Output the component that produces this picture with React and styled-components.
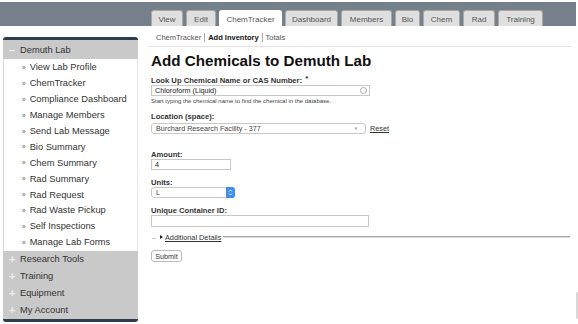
import React from "react";
import styled, { createGlobalStyle } from "styled-components";

const Global = createGlobalStyle`
  html, body { margin: 0; padding: 0; background: #fff; overflow: hidden; }
  body { font-family: "Liberation Sans", Arial, Helvetica, sans-serif; color: #222; }
  * { box-sizing: border-box; }
`;

const Page = styled.div`
  width: 578px;
  height: 324px;
  position: relative;
  overflow: hidden;
`;

const TopStrip = styled.div`
  height: 2px;
`;

const Header = styled.div`
  height: 24px;
  width: 576px;
  background: #75808a;
  display: flex;
  align-items: flex-end;
  padding-left: 151px;
  gap: 3px;
`;

const Tab = styled.div`
  width: ${(p) => p.w}px;
  height: 16px;
  background: ${(p) => (p.active ? "#fff" : "#dfdfdf")};
  border: 1px solid ${(p) => (p.active ? "#fff" : "#a9a9a9")};
  border-bottom: none;
  border-radius: 3px 3px 0 0;
  font-size: 8px;
  color: #555;
  display: flex;
  align-items: center;
  justify-content: center;
  padding-top: 1px;
  white-space: nowrap;
`;

const Body = styled.div`
  display: flex;
  align-items: flex-start;
  padding-top: 11px;
`;

const Sidebar = styled.div`
  margin-left: 3px;
  width: 135px;
  border-top: 3px solid #2e3d4d;
  border-bottom: 3px solid #2e3d4d;
  border-radius: 3px;
  overflow: hidden;
`;

const SectionHead = styled.div`
  background: #c9c9c9;
  height: ${(p) => p.h}px;
  display: flex;
  align-items: center;
  font-size: 9.3px;
  color: #333;
  padding-left: 6px;
  white-space: nowrap;
`;

const Sign = styled.span`
  width: 11px;
  color: #ececec;
  font-size: 11px;
  font-weight: bold;
`;

const Items = styled.div`
  background: #fff;
  border-left: 1px solid #d6d6d6;
  border-right: 1px solid #e8e8e8;
  padding: 0.5px 0 0.5px 18px;
`;

const Item = styled.div`
  height: 15.9px;
  display: flex;
  align-items: center;
  font-size: 9.3px;
  color: #333;
  white-space: nowrap;
  &::before {
    content: "»";
    font-size: 6.5px;
    margin-right: 4px;
    color: #555;
  }
`;

const Main = styled.div`
  margin-left: 10px;
  width: 423px;
  display: flex;
  flex-direction: column;
`;

const SubNav = styled.div`
  display: flex;
  align-items: center;
  font-size: 7.5px;
  color: #444;
  padding: 0 0 3px 8px;
  margin-top: -5px;
  height: 15px;
  border-bottom: 1px solid #e2e2e2;
`;

const NavItem = styled.span`
  font-weight: ${(p) => (p.bold ? "bold" : "normal")};
  color: ${(p) => (p.bold ? "#111" : "#555")};
  padding: 0 3px;
  border-left: ${(p) => (p.first ? "none" : "1px solid #aaa")};
  line-height: 9px;
  &:first-child { padding-left: 0; }
`;

const Title = styled.h1`
  margin: 5px 0 0 3px;
  font-size: 15.2px;
  font-weight: bold;
  color: #111;
  line-height: 18px;
  white-space: nowrap;
`;

const Form = styled.div`
  padding-left: 3px;
  display: flex;
  flex-direction: column;
`;

const Label = styled.div`
  font-size: 7.65px;
  font-weight: bold;
  color: #333;
  margin-top: ${(p) => p.mt || 0}px;
  line-height: 9px;
  white-space: nowrap;
`;

const Star = styled.span`
  font-size: 8px;
  position: relative;
  top: -2px;
  margin-left: 1px;
`;

const TextInput = styled.div`
  width: ${(p) => p.w}px;
  height: ${(p) => p.h || 11}px;
  margin-top: ${(p) => p.mt || 0}px;
  border: 1px solid #c8c8c8;
  font-size: 7.2px;
  color: #222;
  display: flex;
  align-items: center;
  padding-left: 3px;
  justify-content: space-between;
`;

const Circle = styled.span`
  width: 7px;
  height: 7px;
  border: 1px solid #aaa;
  border-radius: 50%;
  margin-right: 2px;
`;

const Help = styled.div`
  font-size: 6px;
  line-height: 7px;
  color: #444;
  margin-top: 2px;
  white-space: nowrap;
`;

const Row = styled.div`
  display: flex;
  align-items: center;
  gap: 4px;
  margin-top: ${(p) => p.mt || 0}px;
`;

const Select = styled.div`
  width: ${(p) => p.w}px;
  height: 11px;
  border: 1px solid #c9c9c9;
  border-radius: 3px;
  font-size: 7.2px;
  color: #444;
  display: flex;
  align-items: center;
  justify-content: space-between;
  padding-left: 4px;
  background: #fff;
`;

const Arrow = styled.span`
  font-size: 4.5px;
  color: #999;
  margin-right: 7px;
`;

const Stepper = styled.span`
  width: 9px;
  height: 11px;
  background: #3d8ef0;
  border-radius: 0 3px 3px 0;
  margin-right: -1px;
  display: flex;
  align-items: center;
  justify-content: center;
`;

const Link = styled.a`
  font-size: 7.3px;
  color: #333;
  text-decoration: underline;
  white-space: nowrap;
`;

const Details = styled.div`
  display: flex;
  align-items: center;
  margin-top: 6px;
  height: 8px;
`;

const Dash = styled.span`
  color: #999;
  width: 9px;
  font-size: 7px;
  padding-left: 1px;
`;

const Tri = styled.span`
  width: 0;
  height: 0;
  border-left: 3px solid #222;
  border-top: 2px solid transparent;
  border-bottom: 2px solid transparent;
  margin-right: 2px;
`;

const Rule = styled.span`
  width: 347px;
  height: 0;
  border-top: 1px solid #a8a8a8;
  border-bottom: 1px solid #dcdcdc;
  margin-left: 2px;
`;

const Button = styled.div`
  margin-top: 9px;
  width: 31px;
  height: 12px;
  border: 1px solid #bbb;
  border-radius: 3px;
  font-size: 7.2px;
  color: #333;
  display: flex;
  align-items: center;
  justify-content: center;
`;

const ScrollNub = styled.div`
  position: absolute;
  right: 0;
  top: 292px;
  width: 2px;
  height: 27px;
  background: #d8d8d8;
  border-radius: 1px;
`;

const tabs = [
  ["View", 32],
  ["Edit", 30],
  ["ChemTracker", 63, true],
  ["Dashboard", 53],
  ["Members", 51],
  ["Bio", 25],
  ["Chem", 37],
  ["Rad", 32],
  ["Training", 45],
];

const items = [
  "View Lab Profile",
  "ChemTracker",
  "Compliance Dashboard",
  "Manage Members",
  "Send Lab Message",
  "Bio Summary",
  "Chem Summary",
  "Rad Summary",
  "Rad Request",
  "Rad Waste Pickup",
  "Self Inspections",
  "Manage Lab Forms",
];

export default function App() {
  return (
    <Page>
      <Global />
      <TopStrip />
      <Header>
        {tabs.map(([t, w, a]) => (
          <Tab key={t} w={w} active={a}>
            {t}
          </Tab>
        ))}
      </Header>
      <Body>
        <Sidebar>
          <SectionHead h={19}>
            <Sign>–</Sign>Demuth Lab
          </SectionHead>
          <Items>
            {items.map((i) => (
              <Item key={i}>{i}</Item>
            ))}
          </Items>
          {["Research Tools", "Training", "Equipment", "My Account"].map((s) => (
            <SectionHead key={s} h={17}>
              <Sign>+</Sign>
              {s}
            </SectionHead>
          ))}
        </Sidebar>
        <Main>
          <SubNav>
            <NavItem first>ChemTracker</NavItem>
            <NavItem bold>Add Inventory</NavItem>
            <NavItem>Totals</NavItem>
          </SubNav>
          <Title>Add Chemicals to Demuth Lab</Title>
          <Form>
            <Label mt={6}>
              Look Up Chemical Name or CAS Number: <Star>*</Star>
            </Label>
            <TextInput w={219}>
              Chloroform (Liquid)
              <Circle />
            </TextInput>
            <Help>Start typing the chemical name to find the chemical in the database.</Help>
            <Label mt={7}>Location (space):</Label>
            <Row mt={1.5}>
              <Select w={215}>
                Burchard Research Facility - 377
                <Arrow>▼</Arrow>
              </Select>
              <Link>Reset</Link>
            </Row>
            <Label mt={16.5}>Amount:</Label>
            <TextInput w={80}>4</TextInput>
            <Label mt={7.5}>Units:</Label>
            <Row mt={0.5}>
              <Select w={84}>
                L
                <Stepper>
                  <svg width="5" height="7" viewBox="0 0 5 7">
                    <path d="M1 2.5 L2.5 1 L4 2.5 M1 4.5 L2.5 6 L4 4.5" stroke="#fff" strokeWidth="0.9" fill="none" />
                  </svg>
                </Stepper>
              </Select>
            </Row>
            <Label mt={8}>Unique Container ID:</Label>
            <TextInput w={218} h={12} />
            <Details>
              <Dash>–</Dash>
              <Tri />
              <Link>Additional Details</Link>
              <Rule />
            </Details>
            <Button>Submit</Button>
          </Form>
        </Main>
      </Body>
      <ScrollNub />
    </Page>
  );
}
